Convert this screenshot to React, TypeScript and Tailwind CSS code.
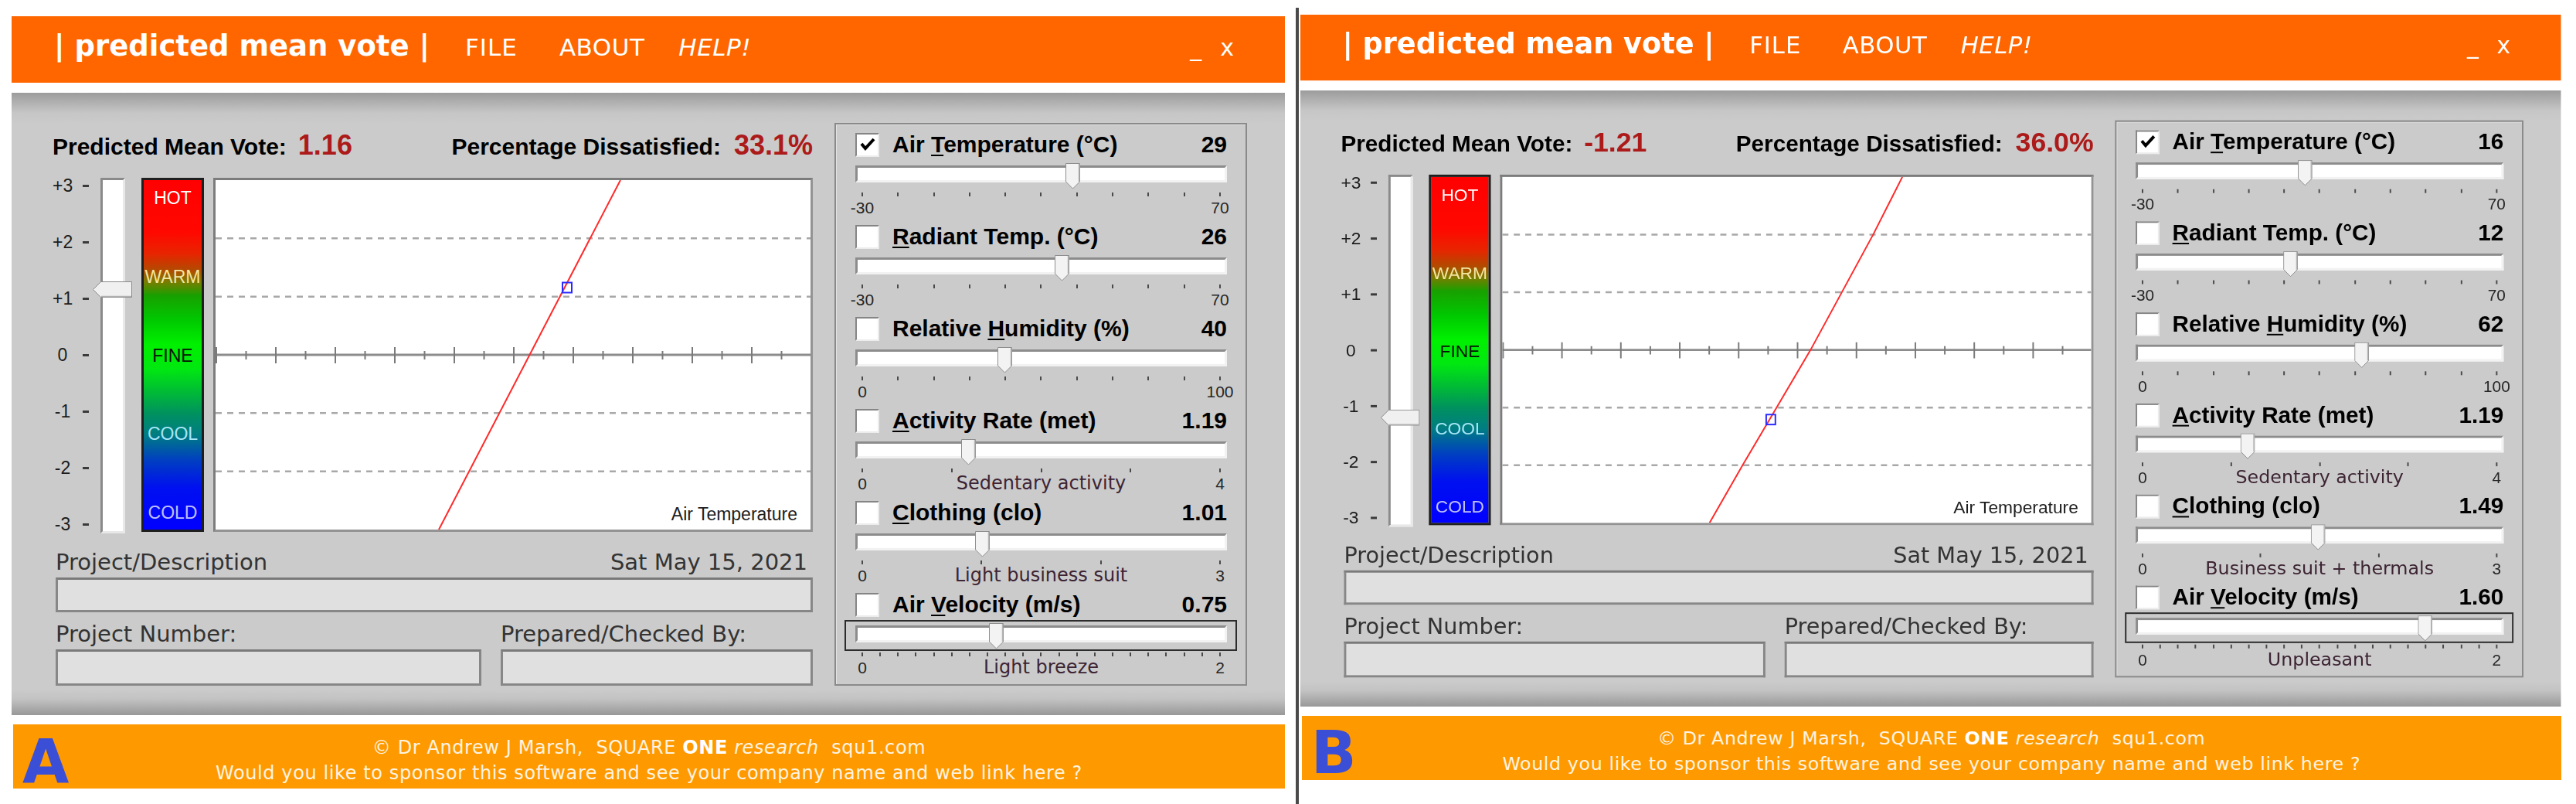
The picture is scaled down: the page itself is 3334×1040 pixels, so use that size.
import React from 'react';

const LIB = "font-['Liberation_Sans',Arial,sans-serif]";
const DV = "font-['DejaVu_Sans',Verdana,sans-serif]";

type RowData = {
  label: string;
  ul: number;
  value: string;
  frac: number;
  ticks: number;
  min: string;
  max: string;
  desc?: string;
  checked?: boolean;
  focus?: boolean;
};

type PanelData = {
  letter: string;
  pmv: number;
  pmvText: string;
  ppd: string;
  line: string;
  marker: [number, number];
  rows: RowData[];
};

const panelA: PanelData = {
  letter: 'A',
  pmv: 1.16,
  pmvText: '1.16',
  ppd: '33.1%',
  line: '524,0 289,452',
  marker: [455, 139],
  rows: [
    { label: 'Air Temperature (°C)', ul: 4, value: '29', frac: 0.59, ticks: 11, min: '-30', max: '70', checked: true },
    { label: 'Radiant Temp. (°C)', ul: 0, value: '26', frac: 0.56, ticks: 11, min: '-30', max: '70' },
    { label: 'Relative Humidity (%)', ul: 9, value: '40', frac: 0.4, ticks: 11, min: '0', max: '100' },
    { label: 'Activity Rate (met)', ul: 0, value: '1.19', frac: 1.19 / 4, ticks: 5, min: '0', max: '4', desc: 'Sedentary activity' },
    { label: 'Clothing (clo)', ul: 0, value: '1.01', frac: 1.01 / 3, ticks: 4, min: '0', max: '3', desc: 'Light business suit' },
    { label: 'Air Velocity (m/s)', ul: 4, value: '0.75', frac: 0.375, ticks: 21, min: '0', max: '2', desc: 'Light breeze', focus: true },
  ],
};

const panelB: PanelData = {
  letter: 'B',
  pmv: -1.21,
  pmvText: '-1.21',
  ppd: '36.0%',
  line: '523,0 485,75 403,226 314,377 271,452',
  marker: [351, 317],
  rows: [
    { label: 'Air Temperature (°C)', ul: 4, value: '16', frac: 0.46, ticks: 11, min: '-30', max: '70', checked: true },
    { label: 'Radiant Temp. (°C)', ul: 0, value: '12', frac: 0.42, ticks: 11, min: '-30', max: '70' },
    { label: 'Relative Humidity (%)', ul: 9, value: '62', frac: 0.62, ticks: 11, min: '0', max: '100' },
    { label: 'Activity Rate (met)', ul: 0, value: '1.19', frac: 1.19 / 4, ticks: 5, min: '0', max: '4', desc: 'Sedentary activity' },
    { label: 'Clothing (clo)', ul: 0, value: '1.49', frac: 1.49 / 3, ticks: 4, min: '0', max: '3', desc: 'Business suit + thermals' },
    { label: 'Air Velocity (m/s)', ul: 4, value: '1.60', frac: 0.8, ticks: 21, min: '0', max: '2', desc: 'Unpleasant', focus: true },
  ],
};

const scaleLabels = ['+3', '+2', '+1', '0', '-1', '-2', '-3'];

function Chart({ line, marker }: { line: string; marker: [number, number] }) {
  const dashes = [75.3, 150.7, 301.3, 376.7];
  const majors = Array.from({ length: 10 }, (_, i) => i * 77 + 1);
  const minors = Array.from({ length: 10 }, (_, i) => i * 77 + 39.5);

  return (
    <div className="relative w-[776px] h-[458px] bg-white border-[3px] border-[#939393] border-t-[#7c7c7c] border-l-[#7c7c7c]">
      <svg width="770" height="452" className="block">
        {dashes.map((y) => (
          <line key={y} x1="0" x2="770" y1={y} y2={y} stroke="#a8a8a8" strokeWidth="2.5" strokeDasharray="8 7" />
        ))}
        <line x1="0" x2="770" y1="226" y2="226" stroke="#8c8c8c" strokeWidth="3" />
        {majors.map((x) => (
          <line key={x} x1={x} x2={x} y1="216" y2="237" stroke="#7a7a7a" strokeWidth="2" />
        ))}
        {minors.map((x) => (
          <line key={x} x1={x} x2={x} y1="221" y2="232" stroke="#7a7a7a" strokeWidth="2" />
        ))}
        <polyline points={line} fill="none" stroke="#ff2a2a" strokeWidth="2" />
        <rect x={marker[0] - 6} y={marker[1] - 6.5} width="12" height="13" fill="none" stroke="#2a2aff" strokeWidth="2" />
      </svg>
      <span className={`absolute right-[17px] bottom-[8px] ${LIB} text-[23px] leading-[24px] text-[#1e1e1e]`}>
        Air Temperature
      </span>
    </div>
  );
}

function Row({ r }: { r: RowData }) {
  const before = r.label.slice(0, r.ul);
  const ch = r.label[r.ul];
  const after = r.label.slice(r.ul + 1);
  const ticks = Array.from({ length: r.ticks }, (_, i) => i);

  return (
    <div className="h-[119px]">
      <div className="h-[32px] flex items-center pl-[25px] pr-[24px]">
        <div className="w-[31px] h-[31px] bg-white border-2 border-[#ececec] border-t-[#858585] border-l-[#858585] flex items-center justify-center">
          {r.checked && (
            <svg width="24" height="24" viewBox="0 0 24 24">
              <polyline points="4,11 9,17 20,5" fill="none" stroke="#000" strokeWidth="4" />
            </svg>
          )}
        </div>
        <span className={`ml-[17px] ${LIB} font-bold text-[30px] leading-[32px] text-black whitespace-pre`}>
          {before}
          <span className="underline decoration-2 underline-offset-[3px]">{ch}</span>
          {after}
        </span>
        <span className={`ml-auto ${LIB} font-bold text-[30px] leading-[32px] text-black`}>{r.value}</span>
      </div>

      <div
        className={`relative mt-[4px] mx-[11px] h-[40px] border-2 pt-[5px] pl-[12px] pr-[11px] ${
          r.focus ? 'border-[#2c2c2c]' : 'border-transparent'
        }`}
      >
        <div className="h-[22px] bg-white border-[3px] border-[#f2f2f2] border-t-[#8c8c8c] border-l-[#8c8c8c]" />
        <svg className="absolute top-[2px]" style={{ left: 20 + r.frac * 463 - 9 }} width="19" height="34" viewBox="0 0 19 34">
          <polygon points="0.5,0.5 18.5,0.5 18.5,24 9.5,33 0.5,24" fill="#f3f3f3" stroke="#8e8e8e" strokeWidth="1" />
          <line x1="17.5" y1="1" x2="17.5" y2="24" stroke="#b5b5b5" strokeWidth="1.5" />
        </svg>
      </div>

      <div className="mt-[2px] ml-[33px] w-[465px] h-[5px] flex justify-between">
        {ticks.map((t) => (
          <div key={t} className="w-[2px] h-[5px] bg-[#4a4a4a]" />
        ))}
      </div>

      <div className="mt-[4px] ml-[13px] w-[505px] grid grid-cols-[42px_1fr_42px] text-center leading-[21px]">
        <span className={`${LIB} text-[21px] text-[#262626]`}>{r.min}</span>
        <span className={`${DV} text-[24px] leading-[21px] text-[#3d2433]`}>{r.desc ?? ''}</span>
        <span className={`${LIB} text-[21px] text-[#262626]`}>{r.max}</span>
      </div>
    </div>
  );
}

function Panel({ d, className }: { d: PanelData; className: string }) {
  const thumbTop = 216 - d.pmv * 73;

  return (
    <div className={`w-[1648px] shrink-0 ${className}`}>
      {/* title bar */}
      <div className={`h-[86px] bg-[#ff6600] flex items-baseline pt-[20px] pl-[55px] pr-[66px] text-white ${DV}`}>
        <span className="font-bold text-[37px] leading-[37px] whitespace-pre">| predicted mean vote |</span>
        <span className="ml-[46px] text-[31px] leading-[31px] tracking-[1px]">FILE</span>
        <span className="ml-[54px] text-[31px] leading-[31px] tracking-[0.5px]">ABOUT</span>
        <span className="ml-[44px] text-[31px] leading-[31px] italic tracking-[0.5px]">HELP!</span>
        <span className="ml-auto text-[30px] leading-[31px]">_</span>
        <span className="ml-[24px] text-[30px] leading-[31px]">x</span>
      </div>

      {/* body */}
      <div className="mt-[13px] h-[805px] flex items-start pl-[53px] bg-[linear-gradient(to_bottom,#9c9c9c_0px,#c6c6c6_26px,#cbcbcb_40px,#cbcbcb_772px,#c3c3c3_784px,#989898_805px)]">
        <div className="w-[984px] pt-[50px]">
          <div className={`h-[36px] flex items-baseline justify-between ${LIB}`}>
            <div className="flex items-baseline">
              <span className="font-bold text-[30px] leading-[36px] text-black">Predicted Mean Vote:</span>
              <span className="ml-[15px] font-bold text-[36px] leading-[36px] text-[#ac1a1a]">{d.pmvText}</span>
            </div>
            <div className="flex items-baseline">
              <span className="font-bold text-[30px] leading-[36px] text-black">Percentage Dissatisfied:</span>
              <span className="ml-[17px] font-bold text-[36px] leading-[36px] text-[#ac1a1a]">{d.ppd}</span>
            </div>
          </div>

          <div className="mt-[24px] h-[460px] flex items-start">
            <div className={`w-[62px] h-[458px] flex flex-col justify-between ${LIB}`}>
              {scaleLabels.map((s) => (
                <div key={s} className="h-[20px] flex items-center">
                  <span className="w-[26px] text-center text-[23px] leading-[20px] text-[#1c1c1c]">{s}</span>
                  <span className="ml-[13px] w-[8px] h-[3px] bg-[#3a3a3a]" />
                </div>
              ))}
            </div>

            <div className="relative w-[32px] h-[460px] bg-white border-[3px] border-[#e8e8e8] border-t-[#8a8a8a] border-l-[#8a8a8a]">
              <svg className="absolute left-[-13px]" style={{ top: thumbTop }} width="51" height="21" viewBox="0 0 51 21">
                <polygon points="0.5,10.5 10.5,0.5 50.5,0.5 50.5,20.5 10.5,20.5" fill="#f0f0f0" stroke="#8a8a8a" strokeWidth="1" />
                <line x1="11" y1="19.5" x2="50" y2="19.5" stroke="#b0b0b0" strokeWidth="1.5" />
              </svg>
            </div>

            <div
              className={`ml-[21px] w-[81px] h-[458px] border-[3px] border-[#1e1e1e] flex flex-col items-center justify-between pt-[11px] pb-[10px] text-[23px] leading-[24px] ${LIB} bg-[linear-gradient(to_bottom,#ff0000_0%,#ff0800_15%,#e82400_21%,#b04c00_26%,#7c7c00_29%,#18a000_33%,#00c800_40%,#00f000_47%,#00e810_54%,#00b838_61%,#009060_67%,#007c84_73%,#0040c0_80%,#0010f0_88%,#0000ff_100%)]`}
            >
              <span className="text-white">HOT</span>
              <span className="text-[#f2e6a2]">WARM</span>
              <span className="text-[#041004]">FINE</span>
              <span className="text-[#a6e6f6]">COOL</span>
              <span className="text-[#c0c0ff]">COLD</span>
            </div>

            <div className="ml-[12px]">
              <Chart line={d.line} marker={d.marker} />
            </div>
          </div>

          <div className={`mt-[20px] h-[34px] flex items-baseline justify-between pl-[4px] pr-[7px] ${DV} text-[29px] leading-[34px] text-[#333]`}>
            <span>Project/Description</span>
            <span>Sat May 15, 2021</span>
          </div>
          <div className="mt-[3px] ml-[4px] h-[45px] bg-[#e0e0e0] border-[3px] border-[#878787] border-t-[#7a7a7a]" />

          <div className={`mt-[11px] h-[34px] flex pl-[4px] ${DV} text-[29px] leading-[34px] text-[#333]`}>
            <span>Project Number:</span>
            <span className="ml-auto w-[404px]">Prepared/Checked By:</span>
          </div>
          <div className="mt-[3px] ml-[4px] flex gap-[25px]">
            <div className="w-[551px] h-[47px] bg-[#e0e0e0] border-[3px] border-[#878787] border-t-[#7a7a7a]" />
            <div className="flex-1 h-[47px] bg-[#e0e0e0] border-[3px] border-[#878787] border-t-[#7a7a7a]" />
          </div>
        </div>

        {/* controls group */}
        <div className="ml-[28px] mt-[39px] w-[534px] h-[728px] border-2 border-[#8a8a8a] shadow-[inset_1px_1px_0_#e4e4e4] pt-[10px]">
          {d.rows.map((r) => (
            <Row key={r.label} r={r} />
          ))}
        </div>
      </div>

      {/* footer */}
      <div className={`relative mt-[12px] ml-[2px] w-[1646px] h-[83px] bg-[#ff9900] pt-[14px] text-center text-[24px] leading-[33px] tracking-[0.6px] text-[#fff4e0] ${DV}`}>
        <div className="whitespace-pre">
          © Dr Andrew J Marsh,  SQUARE <span className="font-bold text-white">ONE</span> <span className="italic">research</span>  squ1.com
        </div>
        <div>Would you like to sponsor this software and see your company name and web link here ?</div>
        <span className="absolute left-[12px] top-[9px] font-bold text-[78px] leading-[78px] tracking-normal text-[#3b4fd6]">{d.letter}</span>
      </div>
    </div>
  );
}

export default function App() {
  return (
    <div className="w-[3334px] h-[1040px] bg-white flex items-start overflow-hidden">
      <Panel d={panelA} className="ml-[15px] mt-[21px]" />
      <div className="ml-[14px] mt-[10px] w-[4px] h-[1030px] bg-[#4a4a4a] shrink-0" />
      <Panel d={panelB} className="ml-[2px] mt-[19px] scale-[0.99] origin-top-left" />
    </div>
  );
}
